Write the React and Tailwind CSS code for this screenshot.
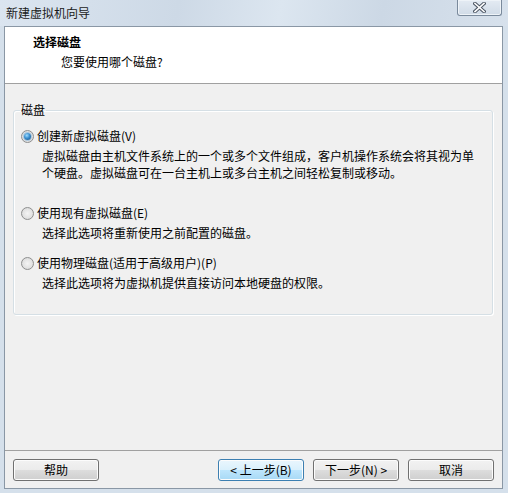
import React from "react";

const btnBase =
  "w-[86px] h-[22px] rounded-[3px] border text-[12px] leading-[16px] text-black flex items-center justify-center shadow-[inset_0_0_0_1px_#fcfcfc]";
const btnNormal =
  "border-[#707070] bg-[linear-gradient(to_bottom,#f2f2f2_0%,#ebebeb_50%,#dddddd_50%,#cfcfcf_100%)]";
const btnFocus =
  "border-[#3c7fb1] bg-[linear-gradient(to_bottom,#eaf6fd_0%,#d9f0fc_50%,#bee6fd_50%,#a7d9f5_100%)]";

function Radio({ checked }) {
  return (
    <span className="w-[13px] h-[13px] rounded-full border border-[#8e8f8f] bg-[radial-gradient(circle_at_50%_50%,#f4f4f4_0%,#e2e2e2_60%,#cfcfcf_100%)] flex items-center justify-center shrink-0">
      {checked && (
        <span className="w-[7px] h-[7px] rounded-full bg-[radial-gradient(circle_at_40%_35%,#9fdcff_0%,#3a8fd0_45%,#164a7a_100%)] shadow-[0_0_0_1px_#a9c6dd]" />
      )}
    </span>
  );
}

function Opcion({ checked, label, children, className = "" }) {
  return (
    <div className={className}>
      <div className="flex items-center gap-[3px] h-[16px]">
        <Radio checked={checked} />
        <span className="leading-[16px]">{label}</span>
      </div>
      <p className="ml-[21px] mt-[3px] leading-[17px]">{children}</p>
    </div>
  );
}

export default function App() {
  return (
    <div className="w-[508px] h-[493px] bg-[#d5e0eb] flex flex-col font-['Noto_Sans_CJK_SC','Noto_Sans',sans-serif] text-[12px] text-black overflow-hidden">
      {/* barra de titulo */}
      <div className="h-[26px] shrink-0 flex items-start justify-between bg-[linear-gradient(100deg,#dbe5f0_0%,#cdd9e6_35%,#dce6f0_55%,#ccd8e5_75%,#d7e1ec_100%)]">
        <span className="ml-[6px] mt-[5px] leading-[16px] text-[#1a1a1a]">新建虚拟机向导</span>
        <button className="mr-[6px] w-[45px] h-[16px] rounded-b-[3px] border border-t-0 border-[#7a8a9c] bg-[linear-gradient(to_bottom,#e4ebf3,#d0dbe7)] flex items-center justify-center shadow-[inset_0_0_0_1px_#eef3f8]">
          <svg width="13" height="11" viewBox="0 0 13 11">
            <path d="M2 1.5 L11 9.5 M11 1.5 L2 9.5" stroke="#4b5563" strokeWidth="3.6" strokeLinecap="square" />
            <path d="M2 1.5 L11 9.5 M11 1.5 L2 9.5" stroke="#ffffff" strokeWidth="1.6" strokeLinecap="square" />
          </svg>
        </button>
      </div>

      {/* area cliente */}
      <div className="ml-[4px] mr-[5px] h-[463px] border border-[#8a97a5] flex flex-col bg-[#f0f0f0]">
        {/* cabecera */}
        <div className="h-[57px] shrink-0 bg-white border-b border-[#a0a0a0] pl-[28px] pt-[7px]">
          <div className="font-bold leading-[16px]">选择磁盘</div>
          <div className="ml-[28px] mt-[4px] leading-[16px]">您要使用哪个磁盘?</div>
        </div>

        {/* cuerpo */}
        <div className="flex-1 pt-[18px] px-[8px] pr-[9px]">
          <fieldset className="border border-[#d5dfe5] rounded-[3px] pl-[7px] pb-[23px] shadow-[inset_1px_1px_0_#ffffff,1px_1px_0_#ffffff]">
            <legend className="ml-[-1px] px-[1px] leading-[16px]">磁盘</legend>
            <Opcion checked label="创建新虚拟磁盘(V)" className="mt-[10px]">
              虚拟磁盘由主机文件系统上的一个或多个文件组成，客户机操作系统会将其视为单
              <br />
              个硬盘。虚拟磁盘可在一台主机上或多台主机之间轻松复制或移动。
            </Opcion>
            <Opcion label="使用现有虚拟磁盘(E)" className="mt-[24px]">
              选择此选项将重新使用之前配置的磁盘。
            </Opcion>
            <Opcion label="使用物理磁盘(适用于高级用户)(P)" className="mt-[14px]">
              选择此选项将为虚拟机提供直接访问本地硬盘的权限。
            </Opcion>
          </fieldset>
        </div>

        {/* pie */}
        <div className="h-[38px] shrink-0 border-t border-[#a0a0a0] px-[8px] pt-[8px] flex items-start">
          <button className={`${btnBase} ${btnNormal}`}>帮助</button>
          <div className="flex-1" />
          <button className={`${btnBase} ${btnFocus}`}>&lt; 上一步(B)</button>
          <button className={`${btnBase} ${btnNormal} ml-[9px]`}>下一步(N) &gt;</button>
          <button className={`${btnBase} ${btnNormal} ml-[9px]`}>取消</button>
        </div>
      </div>
    </div>
  );
}
